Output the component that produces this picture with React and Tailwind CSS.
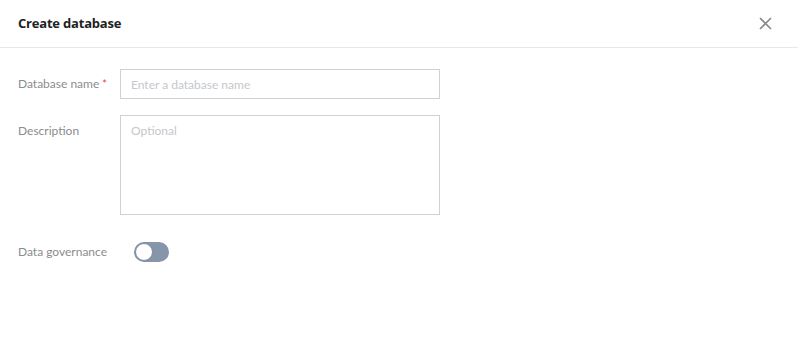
import React from 'react';

const App = () => {
  return (
    <div className="w-[798px] h-[340px] bg-white font-['Lato',sans-serif]">
      {/* Header */}
      <div className="h-[48px] flex items-center justify-between pl-[18px] pr-[26px] border-b border-[#e5e8ee]">
        <h2 className="font-['Open_Sans',sans-serif] text-[13px] font-bold text-[#222] tracking-[-0.2px]">Create database</h2>
        <button className="w-[14px] h-[14px] flex items-center justify-center text-[#888]">
          <svg width="13" height="13" viewBox="0 0 13 13" fill="none" stroke="currentColor" strokeWidth="1.6">
            <path d="M1 1L12 12M12 1L1 12" />
          </svg>
        </button>
      </div>

      {/* Form */}
      <div className="pl-[18px] pt-[21px] flex flex-col">
        <div className="flex items-center h-[30px]">
          <label className="w-[102px] text-[12px] text-[#8c8c8c]">
            Database name <span className="text-[11px] text-[#e54545]">*</span>
          </label>
          <input
            className="w-[320px] h-[30px] border border-[#cdd1d8] px-[10px] text-[12px] outline-none placeholder:text-[#c4c7cc]"
            placeholder="Enter a database name"
          />
        </div>

        <div className="flex items-start mt-[16px]">
          <label className="w-[102px] text-[12px] text-[#8c8c8c] pt-[7px]">Description</label>
          <textarea
            className="w-[320px] h-[100px] border border-[#cdd1d8] px-[10px] py-[6px] text-[12px] outline-none resize-none placeholder:text-[#c4c7cc]"
            placeholder="Optional"
          />
        </div>

        <div className="flex items-center mt-[26px] h-[22px]">
          <label className="w-[116px] text-[12px] text-[#8c8c8c]">Data governance</label>
          <div className="w-[35px] h-[20px] rounded-full bg-[#8795aa] relative">
            <span className="absolute left-[1px] top-[1px] w-[18px] h-[18px] rounded-full bg-white border border-[#7c8aa0]" />
          </div>
        </div>
      </div>
    </div>
  );
};

export default App;
